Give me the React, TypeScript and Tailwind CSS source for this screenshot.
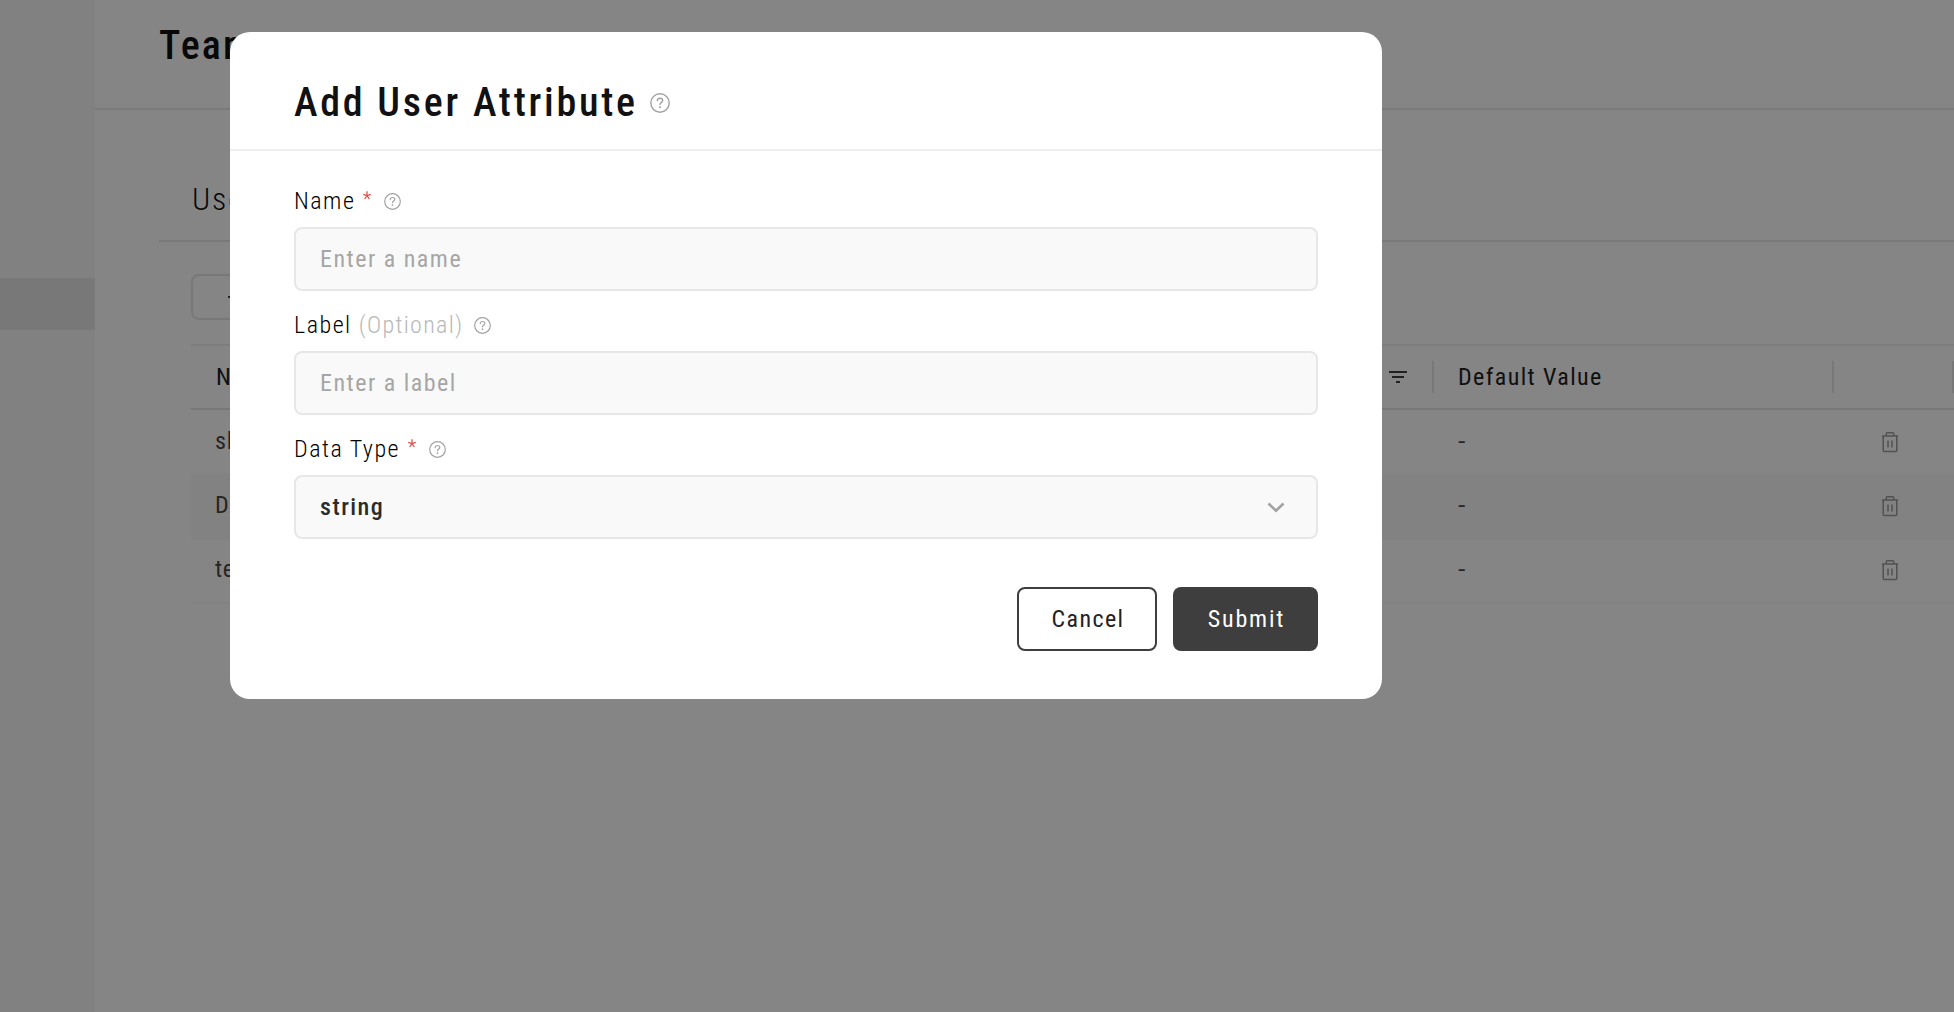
import React from "react";

function HelpIcon({ size }: { size: number }) {
  return (
    <svg width={size} height={size} viewBox="0 0 20 20" fill="none" stroke="#a3a3a3" strokeWidth="1.4" strokeLinecap="round" className="shrink-0">
      <circle cx="10" cy="10" r="9.2" />
      <path d="M7.3 7.7C7.4 6.1 8.5 5.3 10 5.3s2.7.9 2.7 2.3c0 1.7-2.7 1.9-2.7 3.9" />
      <circle cx="10" cy="14.3" r="1" fill="#a3a3a3" stroke="none" />
    </svg>
  );
}

function TrashIcon() {
  return (
    <svg width="20" height="22" viewBox="0 0 20 22" fill="none" stroke="#9c9c9c" strokeWidth="1.5">
      <path d="M2 5h16M3.2 5v14.6c0 .6.4 1 1 1h11.6c.6 0 1-.4 1-1V5M6.3 5V2.6c0-.5.3-.8.8-.8h5.8c.5 0 .8.3.8.8V5M8 9.5v7M12 9.5v7" />
    </svg>
  );
}

function FilterIcon() {
  return (
    <svg width="18" height="12" viewBox="0 0 18 12" fill="#404040">
      <path d="M0 0h18v2H0zM3 5h12v2H3zM7 10h4v2H7z" />
    </svg>
  );
}

function Star() {
  return (
    <svg width="8" height="9" viewBox="0 0 8 9" fill="none" stroke="#e0524a" strokeWidth="1.3" className="mb-3 ml-2">
      <path d="M4 .2v4.4M.2 3.3 4 4.6l3.8-1.3M1.6 8 4 4.6 6.4 8" />
    </svg>
  );
}

const rows = ["slack", "Dept", "team"];

function Background() {
  return (
    <div className="flex h-full bg-white">
      <aside className="w-[95px] shrink-0 bg-[#f7f7f7] pt-[278px]">
        <div className="h-[52px] bg-[#e7e7e7]" />
      </aside>
      <main className="min-w-0 flex-1">
        <header className="flex h-[110px] items-center border-b-2 border-[#e8e8e8] pb-[17px] pl-16">
          <h1 className="text-[40px] font-medium leading-[48px] tracking-[2.2px] text-[#111]">Team</h1>
        </header>
        <section className="ml-16 pt-[70px]">
          <div className="flex h-[62px] items-start border-b-2 border-[#e8e8e8] pl-[33px]">
            <h2 className="text-[32px] font-light leading-[38px] tracking-[1.8px] text-[#111]">User</h2>
          </div>
          <div className="pl-8 pt-8">
            <button className="flex h-[46px] w-[160px] items-center rounded-lg border-2 border-[#e7e7e7] pl-[35px] text-2xl text-[#404040]">
              <svg width="14" height="14" viewBox="0 0 14 14" stroke="#404040" strokeWidth="2"><path d="M0 7h14M7 0v14" /></svg>
            </button>
            <div className="mt-6 border-t-2 border-[#efefef] text-2xl tracking-[1.4px]">
              <div className="flex h-16 items-center border-b-2 border-[#e4e4e4] text-[#222]">
                <div className="w-[920px] pl-[25px]">Name</div>
                <div className="flex h-8 w-[323px] items-center justify-end border-r-2 border-[#e7e7e7] pr-[25px]">
                  <FilterIcon />
                </div>
                <div className="w-[400px] border-r-2 border-[#e7e7e7] pl-6 leading-8">Default Value</div>
                <div className="h-8 w-[120px] border-r-2 border-[#e7e7e7]" />
              </div>
              {rows.map((name, i) => (
                <div key={name} className={`flex items-center border-b-2 border-[#fafafa] text-[#4a4a4a] ${i === 0 ? "h-[66px] pb-0.5" : "h-16 pb-1"} ${i === 1 ? "bg-[#fafafa]" : ""}`}>
                  <div className="w-[1243px] pl-6 tracking-[0.7px]">{name}</div>
                  <div className="w-[400px] pl-6">
                    <span className="inline-block origin-left scale-x-125">-</span>
                  </div>
                  <div className="flex w-[120px] justify-center pr-2 pt-px">
                    <TrashIcon />
                  </div>
                </div>
              ))}
            </div>
          </div>
        </section>
      </main>
    </div>
  );
}

function Field({ label, required, optional, children }: { label: string; required?: boolean; optional?: boolean; children: React.ReactNode }) {
  return (
    <div>
      <div className="mb-2 flex h-9 items-center text-2xl font-light tracking-[1.5px] text-black">
        <span>{label}</span>
        {optional && <span className="ml-[7px] tracking-[1.3px] text-[#b8b8b8]">(Optional)</span>}
        {required && <Star />}
        <span className={optional ? "ml-[11px]" : "ml-[13px]"}>
          <HelpIcon size={17} />
        </span>
      </div>
      <div className="flex h-16 items-center rounded-lg border-2 border-[#e7e7e7] bg-[#f9f9f9] px-6 text-2xl tracking-[1.5px] text-[#a6a6a6]">
        {children}
      </div>
    </div>
  );
}

function Modal() {
  return (
    <div className="absolute left-[230px] top-8 h-[667px] w-[1152px] rounded-[20px] bg-white">
      <div className="flex h-[119px] items-center border-b-2 border-[#efefef] px-16 pt-6">
        <h2 className="text-[40px] font-medium leading-[48px] tracking-[2.75px] text-[#111]">Add User Attribute</h2>
        <span className="ml-3">
          <HelpIcon size={20} />
        </span>
      </div>
      <div className="flex flex-col gap-4 px-16 pt-8">
        <Field label="Name" required>Enter a name</Field>
        <Field label="Label" optional>Enter a label</Field>
        <Field label="Data Type" required>
          <span className="flex-1 font-medium text-[#2b2b2b]">string</span>
          <svg width="18" height="11" viewBox="0 0 18 11" fill="none" stroke="#a3a3a3" strokeWidth="2.6" className="mr-[7px]">
            <path d="m1.5 1.5 7.5 7.3 7.5-7.3" />
          </svg>
        </Field>
      </div>
      <div className="flex justify-end gap-4 px-16 pt-12 text-2xl">
        <button className="h-16 w-[140px] rounded-lg border-2 border-[#3e3e3e] pl-0.5 tracking-[1.4px] text-[#222]">Cancel</button>
        <button className="h-16 w-[145px] rounded-lg bg-[#3e3e3e] pl-0.5 tracking-[1.8px] text-white">Submit</button>
      </div>
    </div>
  );
}

export default function App() {
  return (
    <div className="relative h-[1012px] w-[1954px] overflow-hidden font-['Roboto_Condensed','Roboto',sans-serif]">
      <Background />
      <div className="absolute inset-0 bg-black/48" />
      <Modal />
    </div>
  );
}
